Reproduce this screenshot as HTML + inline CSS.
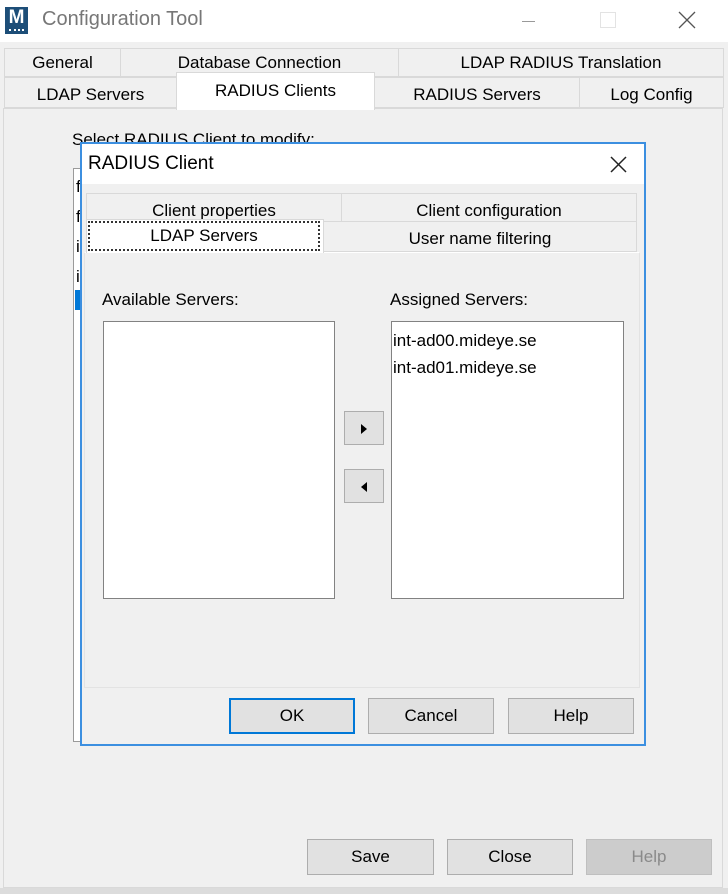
<!DOCTYPE html>
<html><head><meta charset="utf-8"><style>
*{box-sizing:border-box;margin:0;padding:0}
body{width:728px;height:894px;background:#f0f0f0;font-family:"Liberation Sans",sans-serif;font-size:17px;color:#000;position:relative;overflow:hidden}
.a{position:absolute}
.tab{position:absolute;background:#f0f0f0;border:1px solid #d9d9d9;text-align:center;line-height:27px;white-space:nowrap}
.btn{position:absolute;background:#e1e1e1;border:1px solid #adadad;text-align:center;line-height:33px}
.lb{position:absolute;background:#fff;border:1px solid #828282}
</style></head><body>
<div class="a" style="left:0;top:0;width:728px;height:42px;background:#fff"></div>
<div class="a" style="left:5px;top:7px;width:23px;height:27px;background:#1d4e78;color:#fff;font-weight:bold;font-size:19px;text-align:center;line-height:22px">M<div style="position:absolute;left:4px;top:22px;width:15px;height:2px;border-top:2px dotted #fff"></div></div>
<div class="a" style="left:42px;top:8px;font-size:20px;color:#777">Configuration Tool</div>
<div class="a" style="left:522px;top:21px;width:13px;height:1px;background:#999"></div>
<div class="a" style="left:600px;top:12px;width:16px;height:16px;border:1px solid #e3e3e3"></div>
<svg class="a" style="left:678px;top:11px" width="18" height="18"><path d="M1 1L17 17M17 1L1 17" stroke="#555" stroke-width="1.3"/></svg>

<div class="a" style="left:3px;top:108px;width:720px;height:780px;border:1px solid #d9d9d9;background:#f0f0f0"></div>
<div class="a" style="left:0;top:888px;width:728px;height:6px;background:#dcdcdc"></div>
<div class="tab" style="left:4px;top:48px;width:117px;height:29px">General</div>
<div class="tab" style="left:120px;top:48px;width:279px;height:29px">Database Connection</div>
<div class="tab" style="left:398px;top:48px;width:326px;height:29px">LDAP RADIUS Translation</div>
<div class="tab" style="left:4px;top:77px;width:173px;height:31px;line-height:33px">LDAP Servers</div>
<div class="tab" style="left:374px;top:77px;width:206px;height:31px;line-height:33px">RADIUS Servers</div>
<div class="tab" style="left:579px;top:77px;width:145px;height:31px;line-height:33px">Log Config</div>
<div class="tab" style="left:176px;top:72px;width:199px;height:38px;background:#fff;border-bottom:none;line-height:36px">RADIUS Clients</div>

<div class="a" style="left:72px;top:130px">Select RADIUS Client to modify:</div>
<div class="lb" style="left:73px;top:168px;width:40px;height:574px;border-color:#9a9a9a"></div>
<div class="a" style="left:76px;top:172px;line-height:30px">f<br>f<br>i<br>i</div>
<div class="a" style="left:75px;top:290px;width:10px;height:20px;background:#0078d7"></div>

<div class="a" style="left:80px;top:142px;width:566px;height:604px;border:2px solid #3c8fe0;background:#f0f0f0"></div>
<div class="a" style="left:82px;top:144px;width:562px;height:40px;background:#fff"></div>
<div class="a" style="left:88px;top:153px;font-size:19px">RADIUS Client</div>
<svg class="a" style="left:610px;top:156px" width="17" height="17"><path d="M1 1L16 16M16 1L1 16" stroke="#222" stroke-width="1.5"/></svg>

<div class="a" style="left:84px;top:252px;width:556px;height:436px;background:#f0f0f0;border:1px solid #e3e3e3;border-top-color:#fff"></div>
<div class="tab" style="left:86px;top:193px;width:256px;height:29px;line-height:34px">Client properties</div>
<div class="tab" style="left:341px;top:193px;width:296px;height:29px;line-height:34px">Client configuration</div>
<div class="tab" style="left:323px;top:221px;width:314px;height:31px;line-height:33px">User name filtering</div>
<div class="tab" style="left:86px;top:219px;width:238px;height:34px;background:#fff;border-bottom:none"></div>
<div class="a" style="left:88px;top:221px;width:232px;height:30px;border:2px dotted #333;text-align:center;line-height:26px">LDAP Servers</div>

<div class="a" style="left:102px;top:290px">Available Servers:</div>
<div class="a" style="left:390px;top:290px">Assigned Servers:</div>
<div class="lb" style="left:103px;top:321px;width:232px;height:278px"></div>
<div class="lb" style="left:391px;top:321px;width:233px;height:278px"></div>
<div class="a" style="left:393px;top:327px;line-height:27px">int-ad00.mideye.se<br>int-ad01.mideye.se</div>
<div class="btn" style="left:344px;top:411px;width:40px;height:34px"><svg style="position:absolute;left:16px;top:12px" width="6" height="10"><path d="M0 0L6 5L0 10Z" fill="#000"/></svg></div>
<div class="btn" style="left:344px;top:469px;width:40px;height:34px"><svg style="position:absolute;left:16px;top:12px" width="6" height="10"><path d="M6 0L0 5L6 10Z" fill="#000"/></svg></div>

<div class="btn" style="left:229px;top:698px;width:126px;height:36px;border:2px solid #0078d7;line-height:32px">OK</div>
<div class="btn" style="left:368px;top:698px;width:126px;height:36px">Cancel</div>
<div class="btn" style="left:508px;top:698px;width:126px;height:36px">Help</div>

<div class="btn" style="left:307px;top:839px;width:127px;height:36px">Save</div>
<div class="btn" style="left:447px;top:839px;width:126px;height:36px">Close</div>
<div class="btn" style="left:586px;top:839px;width:126px;height:36px;background:#ccc;border-color:#bfbfbf;color:#8a8a8a">Help</div>
</body></html>
